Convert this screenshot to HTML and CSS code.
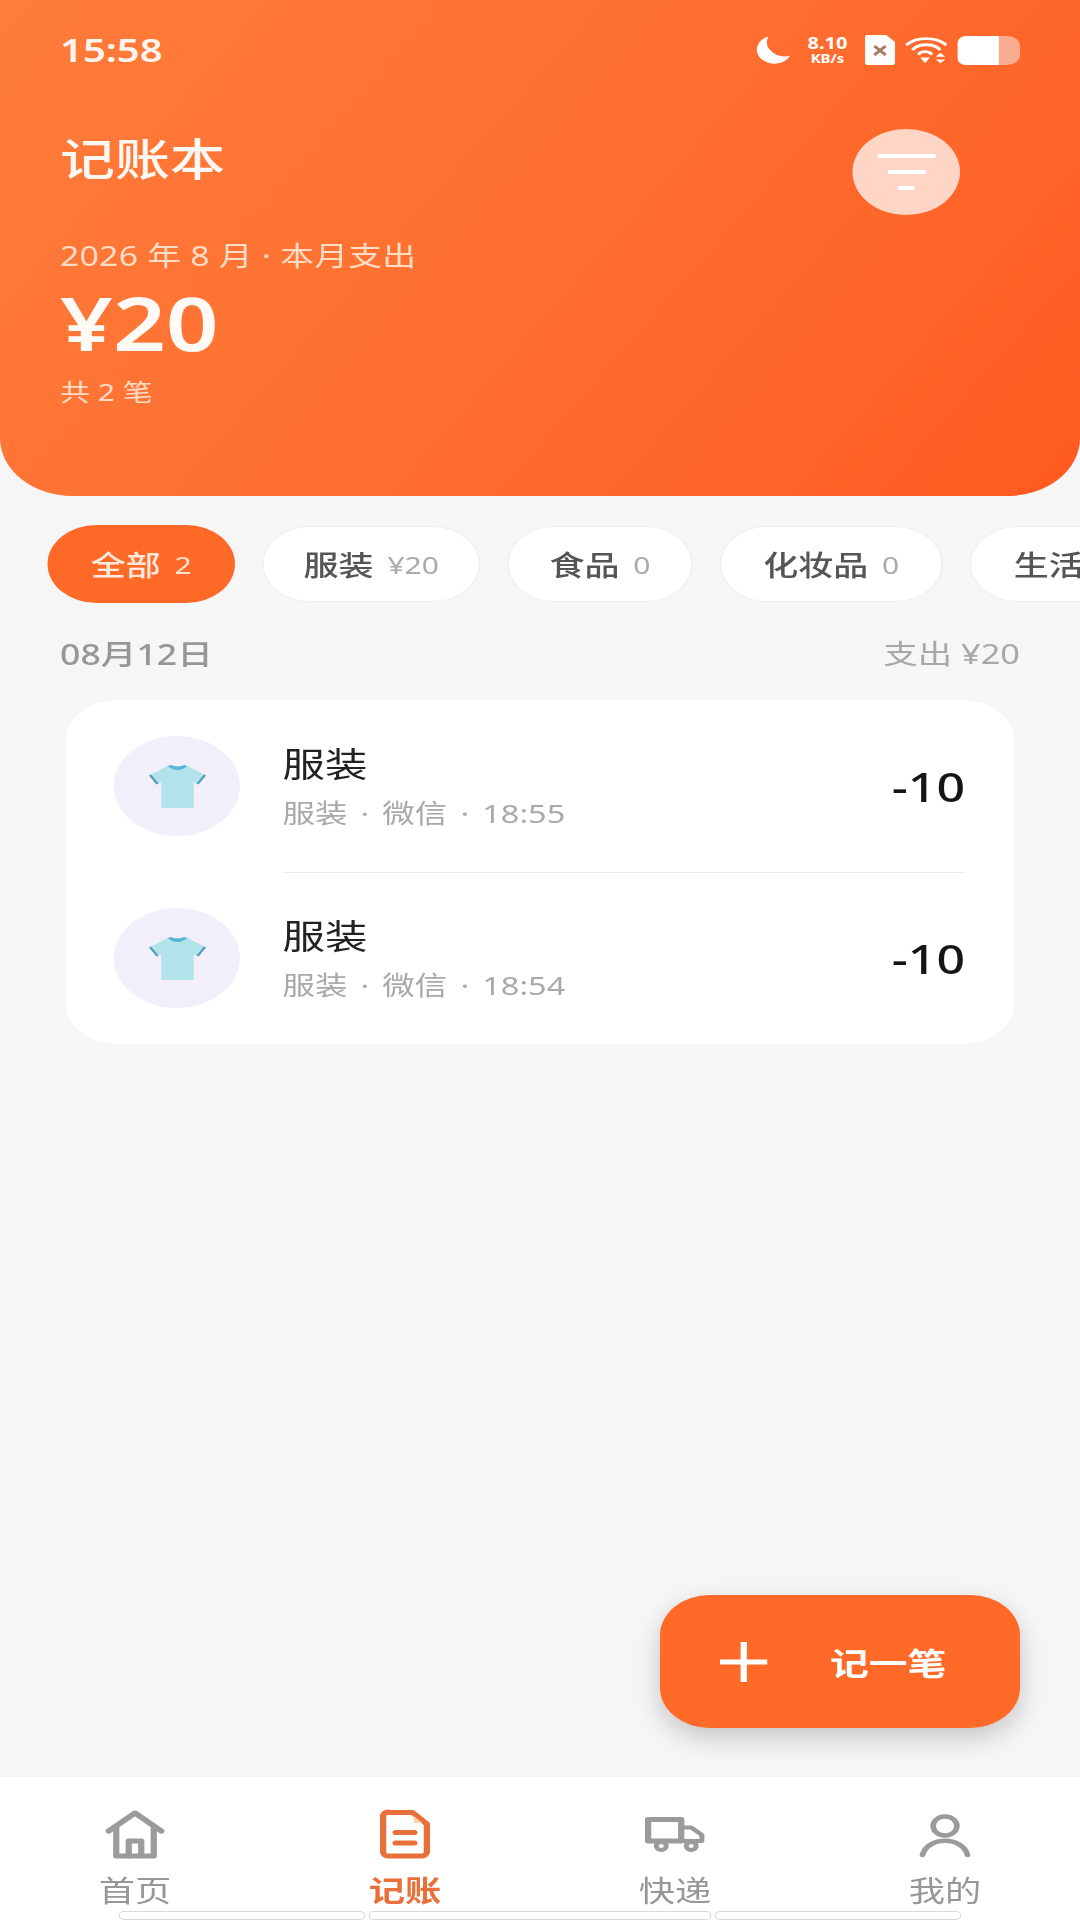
FILE: index.html
```html
<!DOCTYPE html>
<html lang="zh-CN">
<head>
    <meta charset="UTF-8">
    <meta name="viewport" content="width=device-width, initial-scale=1.0">
    <title>记账本</title>
    <link rel="stylesheet" href="styles.css">
</head>
<body>
<div class="app">
    <header class="hero">
        <div class="status">
            <span class="time">15:58</span>
            <div class="status-icons">
                <svg class="ic-moon" viewBox="0 0 30 30"><path d="M11 1 A14.500 14.500 0 1 0 29 21 A15 15 0 0 1 11 1Z" fill="#fff"/></svg>
                <div class="speed"><span>8.10</span><span class="speed-unit">KB/s</span></div>
                <svg class="ic-sim" viewBox="0 0 24 30"><path d="M2 0 H17 L24 7 V28 a2 2 0 0 1 -2 2 H2 a2 2 0 0 1 -2 -2 V2 a2 2 0 0 1 2 -2Z" fill="#fff"/><path d="M7.500 11 L16.500 20 M16.500 11 L7.500 20" stroke="#a8795f" stroke-width="2.500"/></svg>
                <svg class="ic-wifi" viewBox="0 0 38 30" fill="none" stroke="#fff" stroke-width="3" stroke-linecap="round">
                    <path d="M3 9 C11 1 27 1 35 9"/>
                    <path d="M8 14 C13 8 25 8 30 14"/>
                    <path d="M13 19 C15 16 21 16 23 19"/>
                    <path d="M14 23 H22 L18 29Z" fill="#fff" stroke="none"/>
                    <path d="M27 22 H35 L31 18Z M27 25 H35 L31 29Z" fill="#fff" stroke="none"/>
                </svg>
                <div class="battery"><div class="battery-fill"></div></div>
            </div>
        </div>
        <div class="hero-top">
            <h1 class="hero-title">记账本</h1>
            <button class="filter-btn">
                <span class="filter-line w1"></span>
                <span class="filter-line w2"></span>
                <span class="filter-line w3"></span>
            </button>
        </div>
        <div class="hero-sub">2026 年 8 月 · 本月支出</div>
        <div class="hero-amount">¥20</div>
        <div class="hero-count">共 2 笔</div>
    </header>

    <main class="content">
        <div class="pills">
            <div class="pill active"><b>全部</b><span>2</span></div>
            <div class="pill p-clothes"><b>服装</b><span>¥20</span></div>
            <div class="pill p-food"><b>食品</b><span>0</span></div>
            <div class="pill p-makeup"><b>化妆品</b><span>0</span></div>
            <div class="pill p-life"><b>生活</b></div>
        </div>

        <div class="day-head">
            <span class="day-date">08月12日</span>
            <span class="day-total">支出 ¥20</span>
        </div>

        <div class="card">
            <div class="row">
                <div class="avatar">
                    <svg class="shirt" viewBox="0 0 48 43">
                        <path d="M16 1 L2 10 L8 19 L11 17 V43 H37 V17 L40 19 L46 10 L32 1 Z" fill="#b2e2ea"/>
                        <path d="M16 1 Q24 9 32 1 L29 0 Q24 3 19 0Z" fill="#58b4d4"/>
                        <path d="M2 10 L8 19 M46 10 L40 19" stroke="#4f9fb8" stroke-width="2"/>
                    </svg>
                </div>
                <div class="row-text">
                    <div class="row-title">服装</div>
                    <div class="row-sub">服装 · 微信 · 18:55</div>
                </div>
                <div class="row-amount">-10</div>
            </div>
            <div class="row divided">
                <div class="avatar">
                    <svg class="shirt" viewBox="0 0 48 43">
                        <path d="M16 1 L2 10 L8 19 L11 17 V43 H37 V17 L40 19 L46 10 L32 1 Z" fill="#b2e2ea"/>
                        <path d="M16 1 Q24 9 32 1 L29 0 Q24 3 19 0Z" fill="#58b4d4"/>
                        <path d="M2 10 L8 19 M46 10 L40 19" stroke="#4f9fb8" stroke-width="2"/>
                    </svg>
                </div>
                <div class="row-text">
                    <div class="row-title">服装</div>
                    <div class="row-sub">服装 · 微信 · 18:54</div>
                </div>
                <div class="row-amount">-10</div>
            </div>
        </div>
    </main>

    <button class="fab">
        <svg class="fab-plus" viewBox="0 0 38 40"><path d="M0 20 H38 M19 0 V40" stroke="#fff" stroke-width="5"/></svg>
        <span>记一笔</span>
    </button>

    <nav class="tabbar">
        <div class="tabs">
            <div class="tab">
                <svg viewBox="0 0 48 50" fill="none" stroke="#9a9b9d" stroke-width="5" stroke-linejoin="round" stroke-linecap="round">
                    <path d="M3 22 L24 4 L45 22"/>
                    <path d="M9 19 V47 H39 V19"/>
                    <path d="M19 47 V32 H29 V47"/>
                </svg>
                <span>首页</span>
            </div>
            <div class="tab current">
                <svg viewBox="0 0 48 50" fill="none" stroke="#e8703a" stroke-width="5" stroke-linejoin="round" stroke-linecap="round">
                    <path d="M10 3.500 H30 L41.500 15 V43 a4 4 0 0 1 -4 4 H10.500 a4 4 0 0 1 -4 -4 V7 a4 4 0 0 1 4 -4Z"/>
                    <path d="M31 7 L38 14 H31Z" fill="#fbd3b4" stroke="none"/>
                    <path d="M16.500 23.500 H31.500 M16.500 34 H31.500"/>
                </svg>
                <span>记账</span>
            </div>
            <div class="tab">
                <svg viewBox="0 0 48 50" fill="none" stroke="#9a9b9d" stroke-width="5" stroke-linejoin="round">
                    <path d="M2.500 10.500 H29 V32 H2.500Z"/>
                    <path d="M29 18.500 H37 L45.500 26 V32 H29Z" stroke-width="4"/>
                    <circle cx="13" cy="37" r="4" fill="#fff" stroke-width="4"/>
                    <circle cx="37" cy="37" r="4" fill="#fff" stroke-width="4"/>
                </svg>
                <span>快递</span>
            </div>
            <div class="tab">
                <svg viewBox="0 0 48 50" fill="none" stroke="#9a9b9d" stroke-width="4.500" stroke-linecap="round">
                    <circle cx="24" cy="17" r="9.500"/>
                    <path d="M6 46 C10 27 38 27 42 46"/>
                </svg>
                <span>我的</span>
            </div>
        </div>
        <div class="home-bars">
            <i class="bar b1"></i>
            <i class="bar b2"></i>
            <i class="bar b3"></i>
        </div>
    </nav>
</div>
</body>
</html>
```

FILE: styles.css
```css
html, body {
    margin: 0;
    padding: 0;
    width: 1080px;
    height: 1920px;
    overflow: hidden;
    background-color: #f6f6f7;
}
/* the shot is stretched sideways by 1.25, so lay out at 864 and widen */
.app {
    width: 864px;
    height: 1920px;
    position: relative;
    display: flex;
    flex-direction: column;
    transform: scaleX(1.25);
    transform-origin: left top;
    font-family: "Noto Sans", "Noto Sans CJK SC", sans-serif;
    overflow: hidden;
}
.hero {
    height: 496px;
    box-sizing: border-box;
    padding: 0 48px;
    flex: none;
    color: #fff;
    background: linear-gradient(125deg, #ff7c3a 0%, #ff6f30 50%, #ff5a20 100%);
    border-radius: 0 0 58px 58px;
}
.status {
    display: flex;
    justify-content: space-between;
    align-items: center;
    padding-top: 28px;
    height: 44px;
}
.time {
    font-size: 32px;
    font-weight: 600;
    line-height: 44px;
    color: #fff5ee;
}
.status-icons {
    display: flex;
    align-items: center;
}
.ic-moon {
    width: 29px;
    height: 30px;
    margin-right: 10px;
}
.speed {
    display: flex;
    flex-direction: column;
    align-items: center;
    width: 38px;
    margin-right: 11px;
    font-size: 16px;
    font-weight: 700;
    line-height: 17px;
}
.speed-unit {
    font-size: 12px;
    line-height: 13px;
}
.ic-sim {
    width: 24px;
    height: 30px;
    margin-right: 7px;
}
.ic-wifi {
    width: 36px;
    height: 30px;
    margin-right: 7px;
}
.battery {
    width: 50px;
    height: 29px;
    border-radius: 7px 10px 10px 7px;
    background-color: #f9ad90;
    overflow: hidden;
}
.battery-fill {
    width: 33px;
    height: 100%;
    background-color: #fff;
}
.hero-top {
    display: flex;
    justify-content: space-between;
    align-items: flex-start;
    margin-top: 57px;
    padding-right: 48px;
}
.hero-title {
    margin: 0;
    font-size: 44px;
    font-weight: 500;
    line-height: 60px;
    color: #fff8f2;
}
.filter-btn {
    width: 86px;
    height: 86px;
    padding: 0;
    border: none;
    border-radius: 50%;
    background-color: #ffd6c6;
    display: flex;
    flex-direction: column;
    align-items: center;
    justify-content: center;
    gap: 12px;
}
.filter-line {
    display: block;
    height: 4px;
    border-radius: 2px;
    background-color: #fff;
}
.w1 { width: 47px; }
.w2 { width: 31px; }
.w3 { width: 14px; }
.hero-sub {
    margin-top: 23px;
    font-size: 27px;
    letter-spacing: 0.2px;
    line-height: 36px;
    color: #ffdcc6;
}
.hero-amount {
    margin-top: 7px;
    font-size: 74px;
    font-weight: 600;
    line-height: 84px;
    color: #fffaf6;
}
.hero-count {
    margin-top: 10px;
    font-size: 24px;
    line-height: 34px;
    color: #ffdcc6;
}
.content {
    flex: 1;
    min-height: 0;
}
.pills {
    display: flex;
    align-items: center;
    gap: 22px;
    height: 78px;
    margin-top: 29px;
    padding-left: 38px;
    overflow: hidden;
}
.pill {
    flex: none;
    box-sizing: border-box;
    height: 76px;
    padding: 0 34px;
    display: flex;
    align-items: center;
    justify-content: center;
    gap: 11px;
    border: 1px solid #eeeeee;
    border-radius: 38px;
    background-color: #fff;
    color: #aaa;
    font-size: 24px;
}
.pill b {
    font-size: 28px;
    font-weight: 500;
    color: #555;
}
.pill.active {
    width: 150px;
    height: 78px;
    padding: 0;
    border: none;
    border-radius: 39px;
    background-color: #ff6a28;
    color: #ffe3d0;
}
.pill.active b {
    color: #ffe9dc;
}
.p-clothes { width: 174px; padding: 0; }
.p-food { width: 148px; padding: 0; }
.p-makeup { width: 178px; padding: 0; }
.p-life { width: 160px; justify-content: flex-start; }
.day-head {
    display: flex;
    justify-content: space-between;
    align-items: center;
    margin-top: 31px;
    padding: 0 48px;
    height: 36px;
}
.day-date {
    font-size: 28.500px;
    font-weight: 500;
    color: #979797;
}
.day-total {
    font-size: 27.500px;
    color: #a8a8a8;
}
.card {
    margin: 30px 53px 0;
    background-color: #fff;
    border-radius: 40px;
}
.row {
    display: flex;
    align-items: center;
    height: 172px;
    box-sizing: border-box;
    padding: 0 39px 0 38px;
    position: relative;
}
.divided::before {
    content: "";
    position: absolute;
    top: 0;
    left: 173px;
    right: 39px;
    height: 1px;
    background-color: #ececec;
}
.avatar {
    width: 101px;
    height: 100px;
    flex: none;
    border-radius: 50%;
    background-color: #f3effa;
    display: flex;
    align-items: center;
    justify-content: center;
}
.shirt {
    width: 48px;
    height: 43px;
}
.row-text {
    flex: 1;
    margin-left: 34px;
}
.row-title {
    font-size: 34px;
    line-height: 46px;
    color: #222;
}
.row-sub {
    margin-top: 8px;
    font-size: 26px;
    word-spacing: 3.700px;
    line-height: 36px;
    color: #a9a9a9;
}
.row-amount {
    font-size: 40px;
    font-weight: 500;
    color: #151515;
}
.fab {
    position: absolute;
    right: 48px;
    top: 1595px;
    width: 288px;
    height: 133px;
    padding: 0 0 0 48px;
    border: none;
    border-radius: 40px;
    background-color: #ff6a28;
    box-shadow: 0 10px 24px rgba(0, 0, 0, 0.2);
    display: flex;
    align-items: center;
    color: #fff;
    font-family: inherit;
    font-size: 31px;
    font-weight: 700;
}
.fab-plus {
    width: 38px;
    height: 40px;
    margin-right: 50px;
}
.tabbar {
    height: 143px;
    flex: none;
    background-color: #fff;
}
.tabs {
    display: flex;
    height: 134px;
}
.tab {
    flex: 1;
    display: flex;
    flex-direction: column;
    align-items: center;
    padding-top: 32px;
    color: #979797;
    font-size: 29px;
    line-height: 36px;
}
.tab svg {
    width: 48px;
    height: 50px;
    margin-bottom: 14px;
}
.tab.current {
    color: #e8703a;
    font-weight: 700;
}
.home-bars {
    display: flex;
    gap: 3px;
    padding-left: 95px;
}
.bar {
    display: block;
    box-sizing: border-box;
    height: 9px;
    border: 1px solid #d5dbdb;
    border-radius: 4px;
}
.b1 { width: 197px; }
.b2 { width: 274px; }
.b3 { width: 197px; }
```
